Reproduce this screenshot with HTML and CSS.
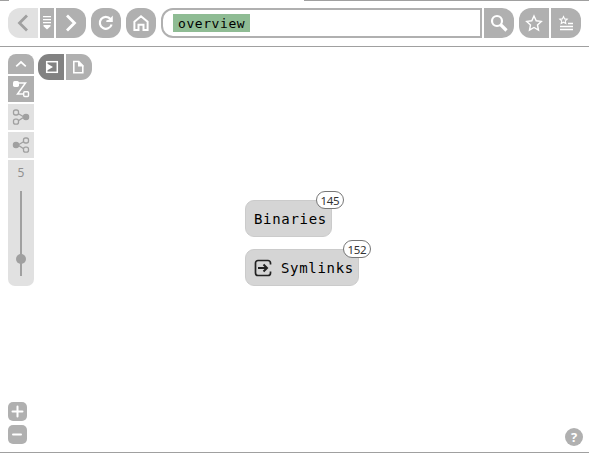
FILE: index.html
```
<!DOCTYPE html>
<html lang="en">
<head>
<meta charset="utf-8">
<title>overview</title>
<link rel="stylesheet" href="styles.css">
</head>
<body>
<div class="app">
  <header class="toolbar">
    <nav class="group history">
      <button class="btn first disabled" aria-label="Back"><svg width="30" height="30"><path d="M19 7.500 11.500 15 19 22.500" stroke="#a0a0a0" stroke-width="2.800"/></svg></button>
      <button class="btn narrow" aria-label="History"><svg width="14" height="30"><path d="M3 8.700h8M3 11.700h8M3 14.700h8" stroke-width="1.300"/><path d="M3.500 17h7v1.200L7 21.500 3.500 18.200z" fill="#fff" stroke="none"/></svg></button>
      <button class="btn last" aria-label="Forward"><svg width="30" height="30"><path d="M11 7.500 18.500 15 11 22.500" stroke-width="2.800"/></svg></button>
    </nav>
    <button class="btn round" aria-label="Reload"><svg width="30" height="30"><path d="M19.500 11A6 6 0 1 0 20.600 16.500" stroke-width="2.200"/><path d="M21.800 7.500V14h-6.500v-1.500l3-1z" fill="#fff" stroke="none"/></svg></button>
    <button class="btn round" aria-label="Home"><svg width="30" height="30"><path d="M8.400 13.700 15 8.300l6.600 5.400v8.400h-4.100v-5.300h-5v5.300H8.400z" stroke-width="2"/></svg></button>
    <div class="group search">
      <div class="field"><span class="token">overview</span></div>
      <button class="btn last" aria-label="Search"><svg width="30" height="30"><circle cx="13" cy="13" r="5" stroke-width="2.200"/><path d="m16.500 16.500 6 6" stroke-width="3.200"/></svg></button>
    </div>
    <div class="group">
      <button class="btn first" aria-label="Bookmark"><svg width="30" height="30"><path d="m15 8 2.200 4.800 5.100.6-3.800 3.500 1 5.200-4.500-2.600-4.500 2.600 1-5.200-3.800-3.500 5.100-.6z" stroke-width="1.400"/></svg></button>
      <button class="btn last" aria-label="Bookmarks"><svg width="30" height="30"><path d="m12.500 8.500 1.100 2.400 2.600.3-1.900 1.700.5 2.600-2.300-1.300-2.300 1.300.5-2.600-1.900-1.700 2.600-.3z" stroke-width="1.100"/><path d="M17 15.500h5M9 18.500h13M9 21.500h13" stroke-width="1.300"/></svg></button>
    </div>
  </header>
  <main class="canvas">
    <aside class="side">
      <button class="tool collapse" aria-label="Collapse"><svg width="26" height="20"><path d="m8.200 12.300 4.800-4.300 4.800 4.300" stroke-width="1.700"/></svg></button>
      <button class="tool active" aria-label="All edges"><svg width="26" height="26"><path d="M8 7h9.500L9.500 18H16" stroke-width="1.500"/><rect x="5" y="5" width="6" height="6" rx="1.700" fill="#fff" stroke="none"/><rect x="15.700" y="15.700" width="4.800" height="4.800" rx="1" fill="#afafaf" stroke-width="1.400"/></svg></button>
      <button class="tool" aria-label="Incoming"><svg width="26" height="26" class="gray"><path d="m10 9.500 6 3.500-6 4"/><rect x="5.500" y="6" width="5" height="5" rx="2" fill="#e1e1e1"/><rect x="5.500" y="15.200" width="5" height="5" rx="2" fill="#e1e1e1"/><circle cx="18" cy="13" r="2.600" fill="#a0a0a0"/></svg></button>
      <button class="tool" aria-label="Outgoing"><svg width="26" height="26" class="gray"><path d="m16 9.500-6 3.500 6 4"/><rect x="15.500" y="6" width="5" height="5" rx="2" fill="#e1e1e1"/><rect x="15.500" y="15.200" width="5" height="5" rx="2" fill="#e1e1e1"/><circle cx="8" cy="13" r="2.600" fill="#a0a0a0"/></svg></button>
      <div class="depth"><span class="depth-value">5</span><div class="track"><i class="thumb"></i></div></div>
    </aside>
    <div class="modes">
      <button class="mode current" aria-label="Graph"><svg width="26" height="26"><rect x="8.700" y="7.700" width="10.600" height="10.600" stroke-width="1.500"/><path d="M9 9.500 15 13l-6 3.500z" fill="#fff" stroke="none"/></svg></button>
      <button class="mode" aria-label="File"><svg width="26" height="26"><path d="M7.800 7.500h5l4 4.200v7H7.800z" stroke-width="1.600"/><path d="M12 7v5.500h5.500v-1z" fill="#fff" stroke="none"/></svg></button>
    </div>
    <section class="nodes">
      <div class="node">Binaries<span class="count">145</span></div>
      <div class="node"><svg class="link" width="18" height="18"><path d="M16.500 5.500V4a2.500 2.500 0 0 0-2.500-2.500H4A2.500 2.500 0 0 0 1.500 4v10A2.500 2.500 0 0 0 4 16.500h10a2.500 2.500 0 0 0 2.500-2.500v-1.500" stroke="#222" stroke-width="1.700"/><path d="M4 9h9M9.500 5.500 13 9l-3.500 3.500" stroke="#222" stroke-width="2"/></svg>Symlinks<span class="count">152</span></div>
    </section>
    <div class="zoom">
      <button aria-label="Zoom in"><svg width="19" height="19"><path d="M4.500 9.500h10M9.500 4.500v10" stroke-width="2" stroke-linecap="round"/></svg></button>
      <button aria-label="Zoom out"><svg width="19" height="19"><path d="M5 9.500h8" stroke-width="2" stroke-linecap="round"/></svg></button>
    </div>
    <button class="help">?</button>
  </main>
</div>
</body>
</html>
```
FILE: styles.css
```
* { box-sizing: border-box; }
body { margin: 0; background: #fff; }
button { border: 0; padding: 0; margin: 0; background: #b0b0b0; color: #fff; display: block; }
svg { display: block; fill: none; stroke: #fff; flex: none; }
.app { height: 453px; display: flex; flex-direction: column; border-bottom: 1px solid #a0a0a0; overflow: hidden; }
.toolbar {
  height: 47px; flex: none; padding: 8px 8px 0; display: flex; gap: 5px;
  border-bottom: 1px solid #a0a0a0;
  background: linear-gradient(90deg, #a0a0a0 9px, #fff 9px, #fff 304px, #a0a0a0 304px) 0 0 / 100% 1px no-repeat;
}
.group { display: flex; gap: 2px; height: 30px; }
.btn { width: 30px; height: 30px; }
.btn.narrow { width: 14px; }
.first { border-radius: 12px 0 0 12px; }
.last { border-radius: 0 12px 12px 0; }
.round { border-radius: 12px; }
.disabled { background: #e1e1e1; }
.search { flex: 1; }
.field { flex: 1; border: 2px solid #b0b0b0; border-radius: 12px 0 0 12px; padding: 4px 10px; }
.token {
  display: block; width: 77px; height: 18px; padding-left: 5px; background: #8fbc94; color: #000;
  font: 13px/19px "DejaVu Sans Mono", monospace; letter-spacing: .57px;
}
.canvas { flex: 1; position: relative; display: flex; align-items: flex-start; padding: 7px 8px; }
.side { display: flex; flex-direction: column; gap: 2px; width: 26px; }
.tool { width: 26px; height: 26px; background: #e1e1e1; }
.tool.active { background: #afafaf; }
.tool.collapse { height: 20px; background: #b0b0b0; border-radius: 8px 8px 0 0; }
.gray { stroke: #a0a0a0; stroke-width: 1.3; }
.depth {
  height: 126px; background: #e1e1e1; border-radius: 0 0 7px 7px; padding-top: 3px;
  display: flex; flex-direction: column; align-items: center; gap: 9px;
}
.depth-value { font: 12px/19px "Noto Sans", sans-serif; color: #909090; }
.track { width: 2px; height: 85px; background: #a0a0a0; display: flex; justify-content: center; padding-top: 63px; }
.thumb { flex: none; width: 10px; height: 10px; border-radius: 50%; background: #a0a0a0; }
.modes { display: flex; gap: 2px; margin-left: 4px; }
.mode { width: 26px; height: 26px; border-radius: 0 11px 11px 0; }
.mode.current { background: #828282; border-radius: 11px 0 0 11px; }
.nodes { position: absolute; left: 245px; top: 153px; display: flex; flex-direction: column; align-items: flex-start; gap: 12px; }
.node {
  position: relative; height: 37px; padding: 1px 4px 0 8px; border: 1px solid #cbcbcb; border-radius: 9px;
  background: #d5d5d5; color: #000; display: flex; align-items: center; white-space: nowrap;
  font: 14px/36px "DejaVu Sans Mono", monospace; letter-spacing: .68px;
}
.link { margin: -1px 9px 0 0; }
.count {
  position: absolute; top: -10px; right: -13px; width: 28px; height: 18px; border: 1px solid #777;
  border-radius: 9px; background: #fff; color: #333; text-align: center;
  font: 11.5px/17px "Noto Sans", sans-serif; letter-spacing: -.4px;
}
.zoom { position: absolute; left: 8px; bottom: 8px; display: flex; flex-direction: column; gap: 4px; }
.zoom button { width: 19px; height: 19px; border-radius: 5px; }
.help {
  position: absolute; right: 6px; bottom: 6px; width: 18px; height: 18px; border-radius: 50%;
  font: bold 13px/18px "Open Sans", sans-serif; text-align: center;
}
```
